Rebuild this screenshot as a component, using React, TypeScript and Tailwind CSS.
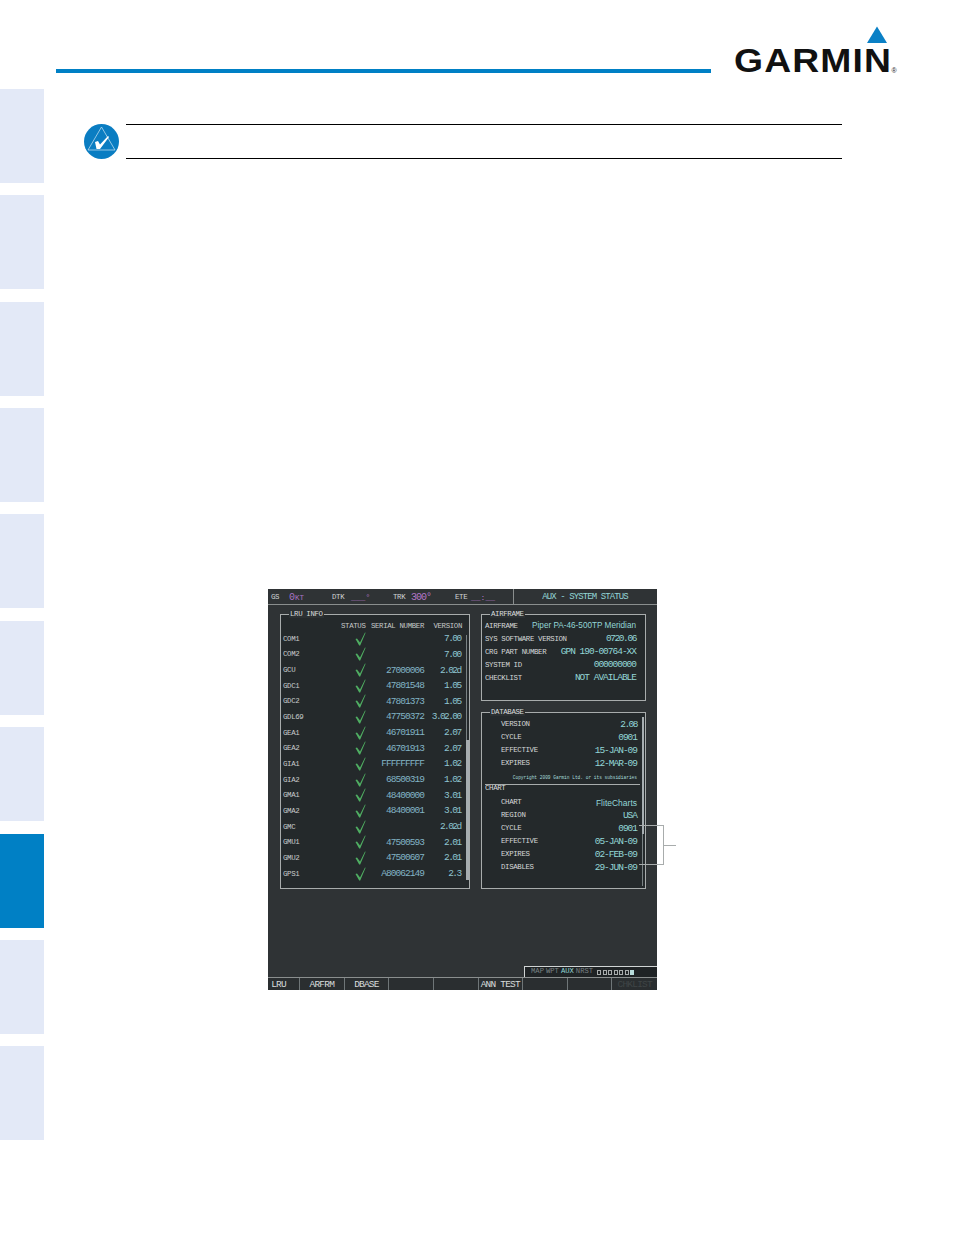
const mono = "font-['Liberation_Mono',monospace]";
const sans = "font-['Liberation_Sans',sans-serif]";

const lru: [string, string, string][] = [
  ["COM1", "", "7.00"],
  ["COM2", "", "7.00"],
  ["GCU", "27000006", "2.02d"],
  ["GDC1", "47801548", "1.05"],
  ["GDC2", "47801373", "1.05"],
  ["GDL69", "47750372", "3.02.00"],
  ["GEA1", "46701911", "2.07"],
  ["GEA2", "46701913", "2.07"],
  ["GIA1", "FFFFFFFFF", "1.02"],
  ["GIA2", "68500319", "1.02"],
  ["GMA1", "48400000", "3.01"],
  ["GMA2", "48400001", "3.01"],
  ["GMC", "", "2.02d"],
  ["GMU1", "47500593", "2.01"],
  ["GMU2", "47500607", "2.01"],
  ["GPS1", "A80062149", "2.3"],
];

const val = "text-[9.5px] tracking-[-1px]";

const airframe: [string, string, string][] = [
  ["AIRFRAME", "Piper PA-46-500TP Meridian", `${sans} text-[8.2px]`],
  ["SYS SOFTWARE VERSION", "0720.06", "text-[9.5px] tracking-[-1.4px]"],
  ["CRG PART NUMBER", "GPN 190-00764-XX", val],
  ["SYSTEM ID", "000000000", val],
  ["CHECKLIST", "NOT AVAILABLE", val],
];

const db1: [string, string, string][] = [
  ["VERSION", "2.08", "text-[9.5px] tracking-[-1.5px]"],
  ["CYCLE", "0901", val],
  ["EFFECTIVE", "15-JAN-09", val],
  ["EXPIRES", "12-MAR-09", val],
];

const db2: [string, string, string][] = [
  ["CHART", "FliteCharts", `${sans} text-[8.5px]`],
  ["REGION", "USA", val],
  ["CYCLE", "0901", val],
  ["EFFECTIVE", "05-JAN-09", val],
  ["EXPIRES", "02-FEB-09", val],
  ["DISABLES", "29-JUN-09", val],
];

const softkeys: [string, string][] = [
  ["LRU", "text-[#d8dcdc] pr-[10px]"],
  ["ARFRM", "text-[#d8dcdc]"],
  ["DBASE", "text-[#d8dcdc]"],
  ["", ""],
  ["", ""],
  ["ANN TEST", "text-[#d8dcdc]"],
  ["", ""],
  ["", ""],
  ["CHKLIST", "text-[#3f4546]"],
];

function Check() {
  return (
    <svg width="11" height="14" viewBox="0 0 11 14" className="-mt-[1px] block">
      <polygon points="0.5,7 2,6.5 5,10.5 10,0.5 10.6,0.8 5.2,13.5 4.2,13.5" fill="#4fae62" />
    </svg>
  );
}

function Row({ label, value, cls, indent }: { label: string; value: string; cls: string; indent?: boolean }) {
  return (
    <div className={`flex h-[13px] items-center justify-between ${indent ? "pl-[16px]" : ""}`}>
      <span className="whitespace-nowrap text-[7.4px] tracking-[-0.35px] text-[#d4d8d8]">{label}</span>
      <span className={`whitespace-nowrap text-[#93d6d6] ${cls}`}>{value}</span>
    </div>
  );
}

function Panel({ title, className, children }: { title: string; className: string; children: React.ReactNode }) {
  return (
    <div className={`relative border border-[#a8acac] bg-[#24292b] ${className}`}>
      <span className="absolute -top-[5px] left-[8px] bg-[#2b3032] px-[1px] text-[7.4px] leading-[8px] tracking-[-0.35px] text-[#d8dcdc]">
        {title}
      </span>
      {children}
    </div>
  );
}

function Screen() {
  const head = "whitespace-nowrap text-[7.4px] tracking-[-0.35px]";
  return (
    <div className={`relative ml-[212px] mt-[430px] flex h-[401px] w-[389px] flex-col bg-[#2f3335] ${mono}`}>
      <div className="flex h-[16px] border-b border-[#8a8e8e] text-[7.4px] leading-none tracking-[-0.35px] text-[#d0d4d4]">
        <div className="flex w-[246px] items-center border-r border-[#8a8e8e] pl-[3px] pt-[2px]">
          <span className="w-[18px]">GS</span>
          <span className="w-[43px] text-[10px] tracking-normal text-[#a873c4]">0<span className="text-[7.5px]">KT</span></span>
          <span className="w-[19px]">DTK</span>
          <span className="w-[42px] text-[8px] tracking-normal text-[#b377c9]">___°</span>
          <span className="w-[18px]">TRK</span>
          <span className="w-[44px] text-[10px] tracking-[-1px] text-[#b377c9]">300°</span>
          <span className="w-[16px]">ETE</span>
          <span className="text-[8px] tracking-normal text-[#b377c9]">__:__</span>
        </div>
        <div className="flex flex-1 items-center justify-center pr-[1px] pt-[2px] text-[9px] tracking-[-0.9px] text-[#93d6d6]">
          AUX - SYSTEM STATUS
        </div>
      </div>

      <div className="flex flex-1 gap-[11px] pl-[12px] pt-[9px]">
        <Panel title="LRU INFO" className="flex h-[275px] w-[190px] pl-[2px] pt-[5.5px]">
          <div className="w-[179px]">
            <div className="grid h-[11px] grid-cols-[58px_28px_55px_38px] items-center text-[#c4c8c8]">
              <span />
              <span className={head}>STATUS</span>
              <span className={`${head} text-right`}>SERIAL NUMBER</span>
              <span className={`${head} text-right`}>VERSION</span>
            </div>
            {lru.map(([name, serial, version]) => (
              <div key={name} className="grid h-[15.67px] grid-cols-[58px_28px_55px_38px] items-center">
                <span className={`${head} text-[#c8cccc]`}>{name}</span>
                <span className="pl-[14px]"><Check /></span>
                <span className="whitespace-nowrap text-right text-[9.5px] tracking-[-0.95px] text-[#82b4c6]">{serial}</span>
                <span className="whitespace-nowrap pr-[1.5px] text-right text-[9.5px] tracking-[-1.6px] text-[#8fc4d0]">{version}</span>
              </div>
            ))}
          </div>
          <div className="ml-[4px] mt-[14px] flex h-[245px] w-[3px] flex-col">
            <div className="h-[105px] border-l border-[#7a8284]" />
            <div className="flex-1 bg-[#a6adb0]" />
          </div>
        </Panel>

        <div className="flex w-[165px] flex-col gap-[11px]">
          <Panel title="AIRFRAME" className="h-[87px] pl-[3px] pr-[9px] pt-[5px]">
            {airframe.map(([l, v, c]) => (
              <Row key={l} label={l} value={v} cls={c} />
            ))}
          </Panel>

          <Panel title="DATABASE" className="flex h-[177px] pl-[3px] pt-[5.5px]">
            <div className="w-[152px]">
              {db1.map(([l, v, c]) => (
                <Row key={l} label={l} value={v} cls={c} indent />
              ))}
              <div className="flex h-[13px] items-center justify-end whitespace-nowrap pt-[2px] text-[4.5px] text-[#a8dcdc]">
                Copyright 2009 Garmin Ltd. or its subsidiaries
              </div>
              <div className="-mr-[3px] h-px bg-[#a8acac]" />
              <div className={`flex h-[12px] items-center pb-[3px] ${head} text-[#d8dcdc]`}>CHART</div>
              {db2.map(([l, v, c]) => (
                <Row key={l} label={l} value={v} cls={c} indent />
              ))}
            </div>
            <div className="ml-[5px] -mt-[2px] flex h-[169px] w-[2px] flex-col">
              <div className="h-[117px] bg-[#a6adb0]" />
              <div className="flex-1 border-l border-[#7a8284]" />
            </div>
          </Panel>
        </div>
      </div>

      <div className="flex h-[11px] justify-end">
        <div className="flex w-[133px] items-center gap-[2px] border-l border-t border-[#d0d4d4] bg-[#1f2325] pl-[6px] text-[7.2px] leading-none text-[#7a8284]">
          <span>MAP</span>
          <span>WPT</span>
          <span className="text-[#93d6d6]">AUX</span>
          <span>NRST</span>
          <span className="ml-[2px] flex gap-[1.5px]">
            {[0, 1, 2, 3, 4, 5].map((i) => (
              <span key={i} className="h-[5px] w-[4px] border border-[#a8acac]" />
            ))}
            <span className="h-[5px] w-[4px] bg-[#b8dcdc]" />
          </span>
        </div>
      </div>

      <div className="grid h-[13px] grid-cols-[32px_repeat(8,1fr)] border-t border-[#8a8e8e] bg-[#2a2e30] text-[9.5px] leading-none tracking-[-0.8px]">
        {softkeys.map(([t, c], i) => (
          <div key={i} className={`flex items-center justify-center whitespace-nowrap border-r border-[#6f7678] pt-[1px] last:border-r-0 ${c}`}>
            {t}
          </div>
        ))}
      </div>

      <div className="absolute left-[371px] top-[236px] h-[40px] w-[25px] border-y border-r border-[#a8acac]" />
      <div className="absolute left-[396px] top-[256px] h-px w-[12px] bg-[#a8acac]" />
    </div>
  );
}

function Logo() {
  return (
    <svg width="170" height="56" viewBox="0 0 170 56" className="ml-[21px] block">
      <polygon points="135,17 145,0.5 155,17" fill="#0a80c6" />
      <text
        x="2"
        y="46"
        fontFamily="'Liberation Sans', sans-serif"
        fontWeight="700"
        fontSize="33"
        letterSpacing="1"
        textLength="158"
        lengthAdjust="spacingAndGlyphs"
        fill="#111111"
      >
        GARMIN
      </text>
      <text x="159.5" y="47" fontFamily="'Liberation Sans', sans-serif" fontSize="7" fill="#222222">®</text>
    </svg>
  );
}

function NoteIcon() {
  return (
    <svg width="35" height="35" viewBox="0 0 35 35" className="ml-[28px] block">
      <circle cx="17.5" cy="17.5" r="17.5" fill="#0a7dc2" />
      <polygon points="17.5,3 31,26 4,26" fill="none" stroke="#cfe6f5" strokeWidth="0.7" />
      <polygon points="11,18 14,17 16,20.5 24,12 25,13 16,25 12.5,25" fill="#ffffff" />
    </svg>
  );
}

export default function App() {
  const tabs = [0, 1, 2, 3, 4, 5, 6, 7, 8, 9];
  return (
    <div className="flex h-[1235px] w-[954px] overflow-hidden bg-white">
      <div className="flex w-[44px] flex-col gap-[12.37px] pt-[89px]">
        {tabs.map((i) => (
          <div key={i} className={`h-[94px] w-[44px] ${i === 7 ? "bg-[#0080c5]" : "bg-[#e3e9f7]"}`} />
        ))}
      </div>
      <div className="ml-[12px] flex-1">
        <div className="flex pt-[26px]">
          <div className="mt-[43px] h-[4px] w-[655px] bg-[#0080c5]" />
          <Logo />
        </div>
        <div className="mt-[42px] flex">
          <NoteIcon />
          <div className="ml-[7px] h-[35px] w-[716px] border-y border-black" />
        </div>
        <Screen />
      </div>
    </div>
  );
}
